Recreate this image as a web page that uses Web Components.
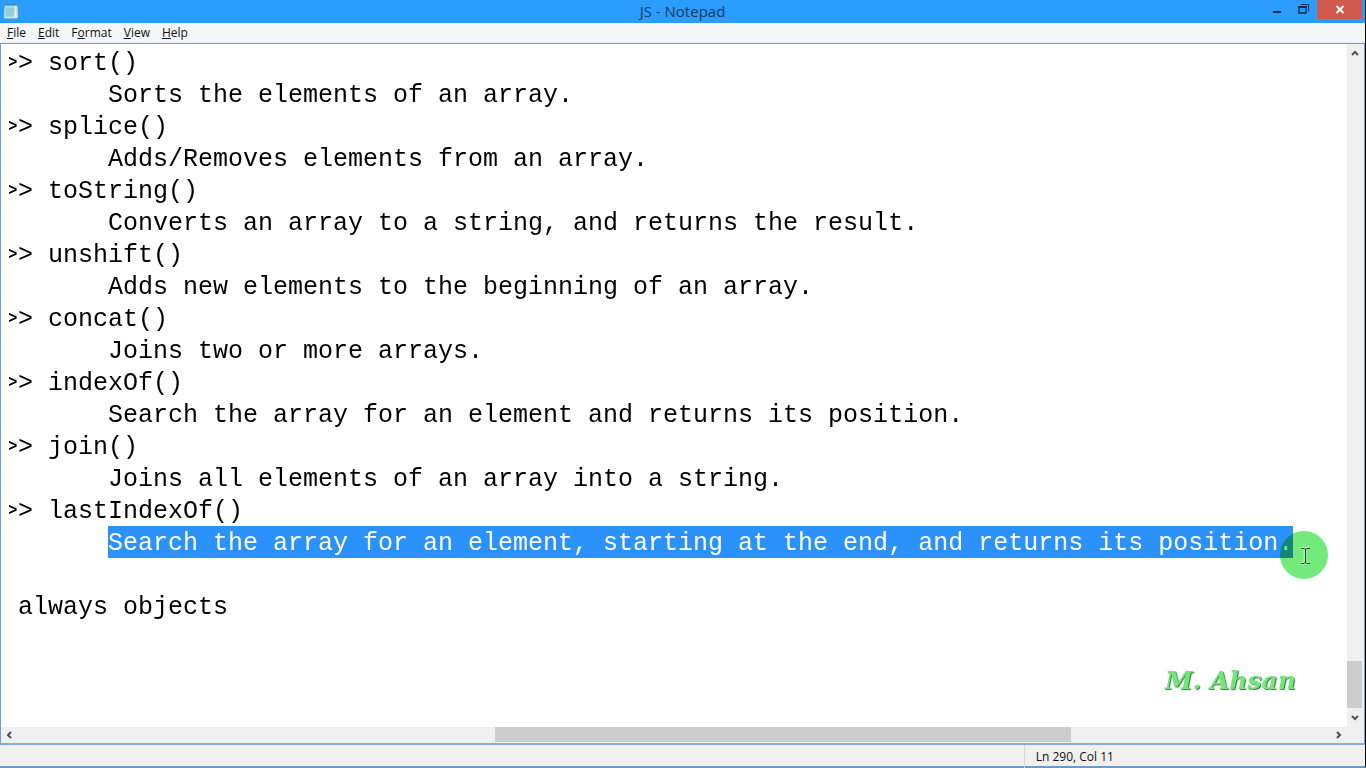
<!DOCTYPE html>
<html lang="en">
<head>
<meta charset="utf-8">
<title>JS - Notepad</title>
<style>
html, body { height: 100%; margin: 0; }
body { font: 12px/18px "Open Sans", "Noto Sans", sans-serif; color: #111; overflow: hidden; background: #000; }
</style>
</head>
<body>
<note-window>
  <title-bar slot="title">JS - Notepad</title-bar>
  <menu-bar slot="menu"></menu-bar>
  <text-editor slot="body"></text-editor>
  <status-bar slot="status">Ln 290, Col 11</status-bar>
</note-window>
<script>
function element(name, html, setup) {
  const t = document.createElement('template');
  t.innerHTML = html;
  customElements.define(name, class extends HTMLElement {
    connectedCallback() {
      if (this.shadowRoot) return;
      this.attachShadow({ mode: 'open' }).append(t.content.cloneNode(true));
      if (setup) setup(this, this.shadowRoot);
    }
  });
}

element('note-window', `
<style>
:host { display: flex; flex-direction: column; height: 100vh; box-sizing: border-box; border-right: 1px solid #000; border-bottom: 2px solid #6e9bc6; background: #f0f0f0; }
main { flex: 1; min-height: 0; display: flex; border: 1px solid #6b9fd8; border-bottom: 2px solid #85aee0; background: #fff; }
::slotted([slot=body]) { flex: 1; min-width: 0; }
</style>
<slot name="title"></slot><slot name="menu"></slot>
<main><slot name="body"></slot></main>
<slot name="status"></slot>`);

element('title-bar', `
<style>
:host { display: grid; grid-template-columns: 1fr auto 1fr; height: 23px; background: #2b9dff; color: #14395c; font-size: 15px; line-height: 23px; }
h1 { margin: 0; font: inherit; }
.icon { margin: 3px 0 0 3px; width: 16px; height: 16px; }
.controls { display: flex; justify-content: flex-end; align-items: flex-start; padding-right: 3px; }
button { border: 0; padding: 0; background: none; width: 26px; height: 19px; display: grid; place-items: center; }
.close { width: 45px; background: #d0584c; }
svg { display: block; }
</style>
<svg class="icon" viewBox="0 0 16 16"><path d="M2 2h12l1 13H1z" fill="#e6f0e6"/><path d="M2 3h10l-1 11H1z" fill="#a6dbe3"/><path d="M3 6h8M3 8h8M3 10h8M3 12h8" stroke="#82c3d0"/><path d="M14 4v11H2" fill="none" stroke="#d8cfa5"/><path d="M3 1v2M5 1v2M7 1v2M9 1v2M11 1v2M13 1v2" stroke="#476678"/></svg>
<h1><slot></slot></h1>
<div class="controls">
<button aria-label="Minimize"><svg width="14" height="19"><path d="M2 11h8v2H2z" fill="#12304c"/></svg></button>
<button aria-label="Restore"><svg width="14" height="19" fill="none" stroke="#12304c"><path d="M4 4.500h7.500v7"/><path d="M2 7h7v6h-7z" stroke-width="1.500"/><path d="M1 7h9" stroke-width="2"/></svg></button>
<button class="close" aria-label="Close"><svg width="10" height="19"><path d="M1.500 6l7 7M8.500 6l-7 7" stroke="#fff" stroke-width="2"/></svg></button>
</div>`);

element('menu-bar', `
<style>
:host { display: block; background: #f5f6f7; border-bottom: 1px solid #e6edf5; }
nav { display: flex; gap: 12px; padding: 0 7px; height: 19px; }
button { border: 0; padding: 0; background: none; color: inherit; font: inherit; line-height: 19px; }
</style>
<nav aria-label="Menu"><button><u>F</u>ile</button><button><u>E</u>dit</button><button>F<u>o</u>rmat</button><button><u>V</u>iew</button><button><u>H</u>elp</button></nav>`);

element('scroll-bar', `
<style>
:host { display: flex; background: #f0f0f0; }
:host([vertical]) { flex-direction: column; }
button { border: 0; padding: 0; background: none; width: 16px; height: 15px; display: grid; place-items: center; flex: none; }
:host([vertical]) button { width: 15px; height: 18px; }
.track { flex: 1; display: flex; flex-direction: inherit; }
.before { flex: var(--before); } .thumb { flex: var(--thumb); background: #cdcdcd; } .after { flex: var(--after); }
path { fill: none; stroke: #505050; stroke-width: 2; }
</style>
<button aria-label="Back"><svg width="8" height="8"><path/></svg></button>
<div class="track"><div class="before"></div><div class="thumb"></div><div class="after"></div></div>
<button aria-label="Forward"><svg width="8" height="8"><path/></svg></button>`, (host, root) => {
  const v = host.hasAttribute('vertical');
  const [a, b] = root.querySelectorAll('path');
  a.setAttribute('d', v ? 'M1 6L4 3L7 6' : 'M6 1L3 4L6 7');
  b.setAttribute('d', v ? 'M1 2L4 5L7 2' : 'M2 1L5 4L2 7');
});

element('pointer-halo', `
<style>
:host { display: block; position: absolute; width: 48px; height: 48px; mix-blend-mode: multiply; }
svg { display: block; }
</style>
<svg width="48" height="48"><circle cx="24" cy="24" r="24" fill="#74ea7c"/><path d="M21 17h3l1 1 1-1h3M25 18v13M21 32h3l1-1 1 1h3" fill="none" stroke="#fff" stroke-width="3" opacity=".4"/><path d="M21 17.500h3l1.500 1 1.500-1h3M25.500 18v14M21 32.500h3l1.500-1 1.500 1h3" fill="none" stroke="#24452a"/></svg>`);

element('text-editor', `
<style>
:host { display: grid; grid-template: minmax(0, 1fr) 15px / minmax(0, 1fr) 15px; padding: 0 1px 1px 0; background: #f0f0f0; border-right: 1px solid #eef4fb; }
.page { position: relative; background: #fff; padding: 2px 0 0 8px; overflow: hidden; isolation: isolate; }
.clip { overflow: hidden; }
.text { margin-left: -6px; font: 25px/28px "Liberation Mono", monospace; color: #000; outline: 0; white-space: pre; }
.text div { min-height: 28px; padding-top: 4px; }
.text .entry { padding-left: 105px; }
.text .loose { padding-left: 15px; }
.text .selected { padding-top: 0; }
mark { display: inline-block; vertical-align: top; padding-top: 4px; background: #2b91fb; color: #fff; }
.sign { position: absolute; right: 51px; bottom: 30px; font: italic bold 25px/32px "DejaVu Serif", serif; color: #6fe878; text-shadow: 1px 1px 1px #3c7044; }
pointer-halo { right: 19px; top: 487px; }
.v { --before: 588; --thumb: 46; --after: 1; }
.h { --before: 478; --thumb: 575; --after: 260; }
</style>
<div class="page"><div class="clip"><div class="text" contenteditable="true" spellcheck="false" role="textbox" aria-label="Document text" aria-multiline="true"></div></div>
<div class="sign">M. Ahsan</div><pointer-halo></pointer-halo></div>
<scroll-bar class="v" vertical></scroll-bar>
<scroll-bar class="h"></scroll-bar>`, (host, root) => {
  const entries = [
    ['sort()', 'Sorts the elements of an array.'],
    ['splice()', 'Adds/Removes elements from an array.'],
    ['toString()', 'Converts an array to a string, and returns the result.'],
    ['unshift()', 'Adds new elements to the beginning of an array.'],
    ['concat()', 'Joins two or more arrays.'],
    ['indexOf()', 'Search the array for an element and returns its position.'],
    ['join()', 'Joins all elements of an array into a string.'],
    ['lastIndexOf()', 'Search the array for an element, starting at the end, and returns its position.', true]
  ];
  root.querySelector('.text').innerHTML =
    entries.map(([n, d, on]) => '<div>&gt;&gt; ' + n + '</div>' +
      (on ? '<div class="entry selected"><mark>' + d + '</mark></div>' : '<div class="entry">' + d + '</div>')).join('') +
    '<div></div><div class="loose">always objects</div>';
});

element('status-bar', `
<style>
:host { display: grid; grid-template-columns: 3fr 1fr; height: 21px; line-height: 24px; background: #f0f0f0; }
output { border-left: 1px solid #d7d7d7; padding-left: 11px; white-space: nowrap; }
</style>
<span></span><output><slot></slot></output>`);
</script>
</body>
</html>
